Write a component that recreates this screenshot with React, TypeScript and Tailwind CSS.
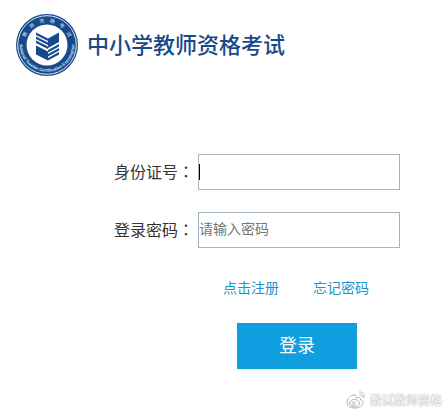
import { useState } from "react";

function Emblem() {
  return (
    <svg viewBox="0 0 64 64" className="size-16 shrink-0" role="img" aria-label="教师资格考试">
      <defs>
        <path id="arc-top" d="M 9.5 35 A 22.7 22.7 0 1 1 54.5 35" />
        <path id="arc-bottom" d="M 4.8 28 A 27.4 27.4 0 1 0 59.2 28" />
      </defs>
      <circle cx="32" cy="32" r="31" fill="#174a8c" />
      <circle cx="32" cy="32" r="29.3" fill="none" stroke="#dbe6f4" strokeWidth="1" />
      <circle cx="32" cy="32" r="20.5" fill="#fff" />
      <text fill="#dbe6f4" fontSize="5" fontFamily='"Noto Sans CJK SC", sans-serif' textAnchor="middle">
        <textPath href="#arc-top" startOffset="50%">
          {"教\u2002\u2002师\u2002\u2002资\u2002\u2002格\u2002\u2002考\u2002\u2002试"}
        </textPath>
      </text>
      <text fill="#dbe6f4" fontSize="4.2" fontWeight="700" fontFamily='"Liberation Sans", sans-serif' textAnchor="middle">
        <textPath href="#arc-bottom" startOffset="50%">National Teacher Certification Examination</textPath>
      </text>
      <g fill="#174a8c">
        <path d="M21 19.500 33 25.500v2.500L21 22zM21 23.500 33 29.500V32L21 26zM21 27.500 33 33.500V36L21 30z" />
        <path d="M44 19.500V29L33 35V25.500z" />
        <path d="M21 32.500 33 38.500V47.500L21 41.500z" />
        <path d="M44 31 33 37v2.500L44 33.500zM44 35 33 41v2.500L44 37.500zM44 39 33 45v2.500L44 41.500z" />
      </g>
    </svg>
  );
}

function WeiboMark() {
  return (
    <svg viewBox="0 0 20 18" className="h-[18px] w-5" fill="none" stroke="#b0b0b0" aria-hidden="true">
      <path d="M8 4C5 4 1 8 1 11.5S4.500 17 9 17s8-2.500 8-5.500c0-1.800-1.500-2.500-2.500-2.800C15 7 14 6 10.500 7 10.500 5.500 10 4 8 4z" />
      <ellipse cx="8.500" cy="12" rx="5" ry="3.500" />
      <circle cx="7.500" cy="12.500" r="1.500" />
      <path d="M13 1c3.500-.500 6 2.500 5 6M13.500 3.500c2-.200 3 1 2.500 3" />
    </svg>
  );
}

export default function App() {
  const [idNumber, setIdNumber] = useState("");
  const [password, setPassword] = useState("");

  const labelClass = "pb-0.5 pl-[114px] text-base whitespace-nowrap";
  const inputClass =
    "block h-9 w-full border border-[#a3b5c1] bg-white pb-1 text-sm text-black outline-none placeholder:text-[#757575]";

  return (
    <div className="bg-white font-['Noto_Sans_CJK_SC',sans-serif] text-[#333]">
      <header className="flex items-center gap-2 px-[15px] pt-[13px]">
        <Emblem />
        <h1 className="pb-1 text-[22px] leading-8 font-medium text-[#174a8c]">中小学教师资格考试</h1>
      </header>

      <form className="pt-[77px]" onSubmit={(e) => e.preventDefault()}>
        <div className="grid grid-cols-[198px_minmax(0,202px)] items-center gap-y-[22px] pr-12">
          <label htmlFor="id-number" className={labelClass}>
            身份证号<span className="font-['Noto_Sans_CJK_TC',sans-serif]" lang="zh-TW">：</span>
          </label>
          <div className="relative">
            <input
              id="id-number"
              type="text"
              className={inputClass}
              value={idNumber}
              onChange={(e) => setIdNumber(e.target.value)}
            />
            {idNumber === "" && (
              <span
                aria-hidden="true"
                className="pointer-events-none absolute top-[10px] left-px h-4 w-px bg-black"
              />
            )}
          </div>
          <label htmlFor="password" className={labelClass}>
            登录密码<span className="font-['Noto_Sans_CJK_TC',sans-serif]" lang="zh-TW">：</span>
          </label>
          <input
            id="password"
            type="password"
            placeholder="请输入密码"
            className={inputClass}
            value={password}
            onChange={(e) => setPassword(e.target.value)}
          />
        </div>

        <div className="flex gap-[34px] pt-[29px] pl-[223px] text-sm text-[#1c94cf]">
          <a href="#register">点击注册</a>
          <a href="#forgot">忘记密码</a>
        </div>

        <div className="pt-[26px] pl-[237px]">
          <button type="submit" className="h-[46px] w-[120px] bg-[#0f9fe0] pb-1 text-lg text-white">
            登录
          </button>
        </div>
      </form>

      <footer className="flex items-center justify-end gap-1 pt-[22px] pr-1.5">
        <WeiboMark />
        <span className="text-xs leading-[18px] text-white [text-shadow:0_0_1px_#999,0_0_2px_#bbb]">
          教试教师资格
        </span>
      </footer>
    </div>
  );
}
